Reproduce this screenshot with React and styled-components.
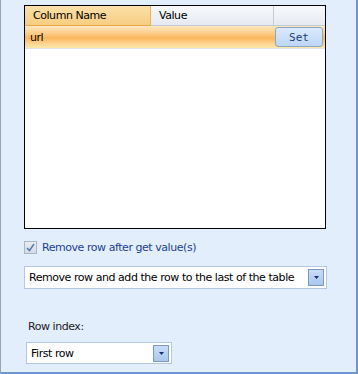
import React from 'react';
import styled, { createGlobalStyle } from 'styled-components';

const Global = createGlobalStyle`
  html, body { margin: 0; padding: 0; background: #e3eefd; }
  body { font-family: "DejaVu Sans", "Liberation Sans", sans-serif; letter-spacing: -0.45px; }
`;

const Panel = styled.div`
  box-sizing: border-box;
  width: 358px;
  height: 374px;
  background: #e3eefd;
  border-left: 1px solid #9aa3b1;
  border-right: 2px solid #6d96cf;
  border-bottom: 2px solid #6d96cf;
  padding: 5px 0 0 23px;
  display: flex;
  flex-direction: column;
`;

const Grid = styled.div`
  box-sizing: border-box;
  width: 302px;
  height: 224px;
  border: 1px solid #000;
  background: #fff;
`;

const HeaderRow = styled.div`
  display: grid;
  grid-template-columns: 126px 123px 1fr;
  height: 20px;
`;

const HeaderCell = styled.div`
  box-sizing: border-box;
  border-right: 1px solid ${p => (p.$active ? '#e8b25c' : '#c5cbd3')};
  border-bottom: 1px solid ${p => (p.$active ? '#e8a848' : '#c5cbd3')};
  background: ${p =>
    p.$active
      ? 'linear-gradient(#fbe0a8, #f7cd82)'
      : 'linear-gradient(#f7f9fc, #e6eaf0)'};
  font-size: 11px;
  color: #000;
  padding: 3px 0 0 8px;
  white-space: nowrap;
  &:last-child { border-right: none; }
`;

const DataRow = styled.div`
  box-sizing: border-box;
  height: 23px;
  display: flex;
  align-items: center;
  justify-content: space-between;
  padding: 0 2px 0 5px;
  background: linear-gradient(#fde8c0 0%, #fccb86 35%, #fbb65c 55%, #fdd592 80%, #fde8a8 100%);
  border-bottom: 1px solid #dfe3ea;
  font-size: 11px;
`;

const SetButton = styled.button`
  box-sizing: border-box;
  width: 48px;
  height: 20px;
  border: 1px solid #8ea5c3;
  border-radius: 3px;
  background: linear-gradient(#dbeafd, #bcd6f6);
  color: #1d3a74;
  font-family: "DejaVu Sans Mono", monospace;
  font-size: 11px;
  letter-spacing: 0;
  padding: 0;
`;

const CheckRow = styled.label`
  display: flex;
  align-items: center;
  gap: 5px;
  margin-top: 12px;
  color: #1e3f8c;
  font-size: 11px;
`;

const CheckBox = styled.span`
  box-sizing: border-box;
  width: 13px;
  height: 13px;
  border: 1px solid #a9b6c8;
  background: linear-gradient(#e8edf3, #d4dce7);
  display: flex;
  align-items: center;
  justify-content: center;
`;

const Select = styled.div`
  box-sizing: border-box;
  width: ${p => p.$w}px;
  height: ${p => p.$h}px;
  margin-top: ${p => p.$mt}px;
  margin-left: ${p => p.$ml || 0}px;
  border: 1px solid #b3c7e1;
  background: #fff;
  display: flex;
  align-items: center;
  justify-content: space-between;
  padding: 0 2px 0 4px;
  font-size: 11px;
  color: #000;
  white-space: nowrap;
`;

const ArrowButton = styled.span`
  box-sizing: border-box;
  flex-shrink: 0;
  width: 16px;
  height: 17px;
  border: 1px solid #7d97bd;
  background: linear-gradient(#c8dcf8, #a9c7f0);
  display: flex;
  align-items: center;
  justify-content: center;
`;

const Label = styled.div`
  margin-top: 31px;
  margin-left: 4px;
  font-size: 11px;
  color: #222;
`;

const Arrow = () => (
  <svg width="5" height="3" viewBox="0 0 5 3">
    <path d="M0 0h5L2.5 3z" fill="#15306b" />
  </svg>
);

export default function App() {
  return (
    <>
      <Global />
      <Panel>
        <Grid>
          <HeaderRow>
            <HeaderCell $active>Column Name</HeaderCell>
            <HeaderCell>Value</HeaderCell>
            <HeaderCell />
          </HeaderRow>
          <DataRow>
            <span>url</span>
            <SetButton>Set</SetButton>
          </DataRow>
        </Grid>
        <CheckRow>
          <CheckBox>
            <svg width="9" height="9" viewBox="0 0 9 9">
              <path d="M1 5l2.5 2.5L8 1" fill="none" stroke="#5b78a8" strokeWidth="1.5" />
            </svg>
          </CheckBox>
          Remove row after get value(s)
        </CheckRow>
        <Select $w={303} $h={23} $mt={12}>
          Remove row and add the row to the last of the table
          <ArrowButton><Arrow /></ArrowButton>
        </Select>
        <Label>Row index:</Label>
        <Select $w={146} $h={22} $mt={9} $ml={2}>
          First row
          <ArrowButton><Arrow /></ArrowButton>
        </Select>
      </Panel>
    </>
  );
}
